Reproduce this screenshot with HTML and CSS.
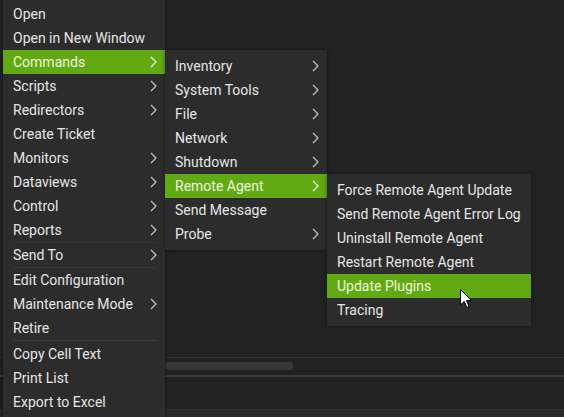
FILE: index.html
```html
<!DOCTYPE html>
<html>
<head>
<meta charset="utf-8">
<link rel="stylesheet" href="styles.css">
</head>
<body>
<div class="app">
  <div class="pane"></div>
  <div class="hline"></div>
  <div class="hscroll"><div class="thumb"></div></div>
  <div class="hline thick"></div>
  <div class="pane2"></div>
  <div class="footer"></div>

  <ul class="menu m1">
    <li class="item">Open</li>
    <li class="item">Open in New Window</li>
    <li class="item sub active">Commands<svg class="chev" viewBox="0 0 7 12"><polyline points="1,1 6,6 1,11"/></svg></li>
    <li class="item sub">Scripts<svg class="chev" viewBox="0 0 7 12"><polyline points="1,1 6,6 1,11"/></svg></li>
    <li class="item sub">Redirectors<svg class="chev" viewBox="0 0 7 12"><polyline points="1,1 6,6 1,11"/></svg></li>
    <li class="item">Create Ticket</li>
    <li class="item sub">Monitors<svg class="chev" viewBox="0 0 7 12"><polyline points="1,1 6,6 1,11"/></svg></li>
    <li class="item sub">Dataviews<svg class="chev" viewBox="0 0 7 12"><polyline points="1,1 6,6 1,11"/></svg></li>
    <li class="item sub">Control<svg class="chev" viewBox="0 0 7 12"><polyline points="1,1 6,6 1,11"/></svg></li>
    <li class="item sub">Reports<svg class="chev" viewBox="0 0 7 12"><polyline points="1,1 6,6 1,11"/></svg></li>
    <li class="sep"></li>
    <li class="item sub">Send To<svg class="chev" viewBox="0 0 7 12"><polyline points="1,1 6,6 1,11"/></svg></li>
    <li class="sep"></li>
    <li class="item">Edit Configuration</li>
    <li class="item sub">Maintenance Mode<svg class="chev" viewBox="0 0 7 12"><polyline points="1,1 6,6 1,11"/></svg></li>
    <li class="item">Retire</li>
    <li class="sep wide"></li>
    <li class="item">Copy Cell Text</li>
    <li class="item">Print List</li>
    <li class="item">Export to Excel</li>
  </ul>

  <ul class="menu m2">
    <li class="item sub">Inventory<svg class="chev" viewBox="0 0 7 12"><polyline points="1,1 6,6 1,11"/></svg></li>
    <li class="item sub">System Tools<svg class="chev" viewBox="0 0 7 12"><polyline points="1,1 6,6 1,11"/></svg></li>
    <li class="item sub">File<svg class="chev" viewBox="0 0 7 12"><polyline points="1,1 6,6 1,11"/></svg></li>
    <li class="item sub">Network<svg class="chev" viewBox="0 0 7 12"><polyline points="1,1 6,6 1,11"/></svg></li>
    <li class="item sub">Shutdown<svg class="chev" viewBox="0 0 7 12"><polyline points="1,1 6,6 1,11"/></svg></li>
    <li class="item sub active">Remote Agent<svg class="chev" viewBox="0 0 7 12"><polyline points="1,1 6,6 1,11"/></svg></li>
    <li class="item">Send Message</li>
    <li class="item sub">Probe<svg class="chev" viewBox="0 0 7 12"><polyline points="1,1 6,6 1,11"/></svg></li>
  </ul>

  <ul class="menu m3">
    <li class="item">Force Remote Agent Update</li>
    <li class="item">Send Remote Agent Error Log</li>
    <li class="item">Uninstall Remote Agent</li>
    <li class="item">Restart Remote Agent</li>
    <li class="item active">Update Plugins</li>
    <li class="item">Tracing</li>
  </ul>

  <svg class="cursor" width="13" height="20" viewBox="0 0 13 20">
    <path d="M0.5,0.5 L0.5,16 L4.2,12.4 L6.8,18.5 L9,17.5 L6.5,11.6 L11.5,11.6 Z"/>
  </svg>
</div>
</body>
</html>
```

FILE: styles.css
```css
* { box-sizing: border-box; }
html, body {
  margin: 0;
  padding: 0;
  background: #1f1f1f;
}
.app {
  position: relative;
  width: 564px;
  height: 417px;
  overflow: hidden;
  display: flex;
  flex-direction: column;
  background: #222222;
  font-family: Roboto, "Noto Sans", sans-serif;
  font-size: 14px;
}
.pane {
  height: 357px;
  background: #222222;
}
.hline {
  height: 1px;
  background: #343434;
}
.hline.thick {
  height: 2px;
  background: #3a3a3a;
}
.hscroll {
  height: 17px;
  padding: 4px 0 4px 165px;
  background: #212121;
}
.thumb {
  width: 128px;
  height: 8px;
  border-radius: 3px;
  background: #383838;
}
.pane2 {
  height: 32px;
  background: #222222;
  border-left: 3px solid #1c1c1c;
}
.footer {
  flex: 1;
  background: #2a2a2a;
  border-top: 1px solid #303030;
}

.menu {
  position: absolute;
  margin: 0;
  padding: 4px 0;
  list-style: none;
  background: #2c2c2c;
  color: #e6e6e6;
  box-shadow: 0 0 4px rgba(0, 0, 0, 0.45);
}
.m1 { left: 3px; top: -2px; width: 162px; padding-bottom: 10px; }
.m2 { left: 165px; top: 50px; width: 162px; }
.m3 { left: 327px; top: 174px; width: 204px; }

.item {
  position: relative;
  height: 24px;
  line-height: 24px;
  padding-left: 10px;
  white-space: nowrap;
}
.item.active {
  background: #62aa14;
  color: #eef6de;
}
.chev {
  position: absolute;
  right: 8px;
  top: 6px;
  width: 7px;
  height: 12px;
}
.chev polyline {
  fill: none;
  stroke: #c8c8c8;
  stroke-width: 1.2;
}
.item.active .chev polyline { stroke: #eef6de; }

.sep {
  height: 1px;
  margin: 0 8px 0 10px;
  background: #363636;
}
.sep.wide {
  height: 1px;
  margin-bottom: 1px;
  background: #3c3c3c;
}

.cursor {
  position: absolute;
  left: 460px;
  top: 289px;
}
.cursor path {
  fill: #ffffff;
  stroke: #000000;
  stroke-width: 1;
  stroke-linejoin: miter;
}
```
